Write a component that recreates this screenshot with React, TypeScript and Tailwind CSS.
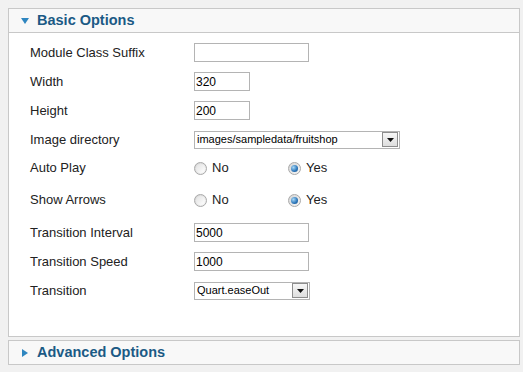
import React from "react";

// Plain Joomla-style module parameter panel

interface FieldRow {
  label: string;
  kind: "text" | "select" | "radio";
  value?: string;
  width?: number;
  checked?: "no" | "yes";
}

const rows: FieldRow[] = [
  { label: "Module Class Suffix", kind: "text", value: "", width: 115 },
  { label: "Width", kind: "text", value: "320", width: 56 },
  { label: "Height", kind: "text", value: "200", width: 56 },
  { label: "Image directory", kind: "select", value: "images/sampledata/fruitshop", width: 206 },
  { label: "Auto Play", kind: "radio", checked: "yes" },
  { label: "Show Arrows", kind: "radio", checked: "yes" },
  { label: "Transition Interval", kind: "text", value: "5000", width: 115 },
  { label: "Transition Speed", kind: "text", value: "1000", width: 115 },
  { label: "Transition", kind: "select", value: "Quart.easeOut", width: 116 },
];

const Radio: React.FC<{ checked: boolean; label: string }> = ({ checked, label }) => (
  <span className="flex items-center">
    <span className="flex h-[13px] w-[13px] items-center justify-center rounded-full border border-[#a9a9a9] bg-[linear-gradient(135deg,#d4d4d4,#f7f7f7)]">
      {checked ? (
        <span className="h-[7px] w-[7px] rounded-full bg-[radial-gradient(circle_at_35%_35%,#a6d8f7,#2a74b8_60%,#174f86)]" />
      ) : (
        <span className="h-[9px] w-[9px] rounded-full bg-[linear-gradient(135deg,#e2e2e2,#ffffff)]" />
      )}
    </span>
    <span className="ml-[5px] text-[13px] text-[#222]">{label}</span>
  </span>
);

const Select: React.FC<{ value: string; width: number }> = ({ value, width }) => (
  <div
    className="flex h-[18px] items-center justify-between border border-[#b4b4b4] bg-white pl-[2px] pr-[1px]"
    style={{ width }}
  >
    <span className="text-[11px] leading-none text-black">{value}</span>
    <span className="flex h-[15px] w-[16px] items-center justify-center border border-[#8d8d8d] bg-[linear-gradient(#f6f6f6,#dedede)]">
      <svg width="7" height="4" viewBox="0 0 7 4">
        <polygon points="0,0 7,0 3.5,4" fill="#111" />
      </svg>
    </span>
  </div>
);

const Field: React.FC<{ row: FieldRow }> = ({ row }) => {
  if (row.kind === "radio") {
    return (
      <div className="flex items-center">
        <div className="w-[94px]">
          <Radio checked={row.checked === "no"} label="No" />
        </div>
        <Radio checked={row.checked === "yes"} label="Yes" />
      </div>
    );
  }
  if (row.kind === "select") {
    return <Select value={row.value ?? ""} width={row.width ?? 120} />;
  }
  return (
    <div
      className="flex h-[19px] items-center border border-[#b4b4b4] bg-white pl-[1px] text-[12px] text-black"
      style={{ width: row.width }}
    >
      {row.value}
    </div>
  );
};

export default function App() {
  return (
    <div
      className="h-[372px] w-[523px] bg-[#f1f1f1] pl-2 pt-2"
      style={{ fontFamily: '"Liberation Sans", Arial, sans-serif' }}
    >
      <div className="w-[512px] border border-[#c8c8c8] bg-white">
        <div className="flex h-[24px] items-center border-b border-[#c8c8c8] bg-[#f8f8f8] pl-[12px]">
          <svg width="8" height="6" viewBox="0 0 8 6" className="mt-[1px]">
            <polygon points="0,0 8,0 4,6" fill="#2f86c0" />
          </svg>
          <span className="ml-[8px] text-[14.5px] font-bold text-[#1b5a85]">Basic Options</span>
        </div>
        <div className="h-[303px] pl-[21px] pt-[5px]">
          {rows.map((row) => (
            <div
              key={row.label}
              className={`flex items-center ${row.kind === "radio" ? "h-[32px] pb-[4px]" : "h-[29px]"}`}
            >
              <span className="w-[164px] text-[13px] text-[#222]">{row.label}</span>
              <Field row={row} />
            </div>
          ))}
        </div>
      </div>
      <div className="mt-[3px] flex h-[25px] w-[512px] items-center border border-[#c8c8c8] bg-[#f8f8f8] pl-[13px]">
        <svg width="6" height="8" viewBox="0 0 6 8">
          <polygon points="0,0 6,4 0,8" fill="#2f86c0" />
        </svg>
        <span className="ml-[9px] text-[14.5px] font-bold text-[#1b5a85]">Advanced Options</span>
      </div>
    </div>
  );
}
